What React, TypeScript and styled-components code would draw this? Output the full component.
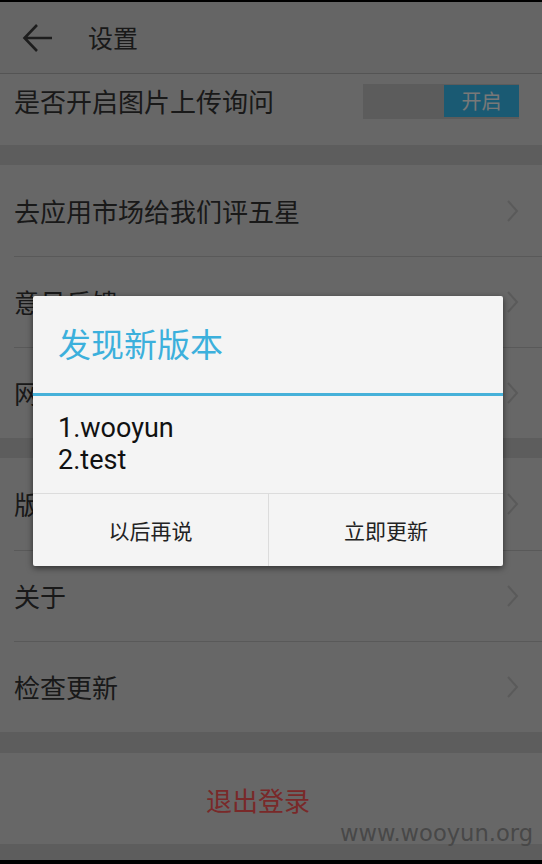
import React from "react";
import styled, { createGlobalStyle } from "styled-components";

const Global = createGlobalStyle`
  html, body { margin: 0; padding: 0; background: #000; }
  body { font-family: "Noto Sans CJK SC", "Noto Sans", sans-serif; }
  * { box-sizing: border-box; }
`;

const Screen = styled.div`
  position: relative;
  width: 542px;
  height: 864px;
  overflow: hidden;
  background: #000;
  display: flex;
  flex-direction: column;
`;

const StatusEdge = styled.div`
  height: 2px;
  background: #000;
  flex: none;
`;

const Page = styled.div`
  flex: none;
  height: 858px;
  background: #bababa;
  display: flex;
  flex-direction: column;
`;

const BottomEdge = styled.div`
  flex: 1;
  background: #000;
`;

const Header = styled.header`
  height: 72px;
  flex: none;
  background: #cbcbcb;
  border-bottom: 1px solid #a8a8a8;
  display: flex;
  align-items: center;
  padding-left: 22px;
`;

const BackButton = styled.div`
  width: 32px;
  height: 30px;
  display: flex;
  align-items: center;
  margin-right: 34px;
`;

const HeaderTitle = styled.h1`
  margin: 0;
  font-size: 25px;
  font-weight: 400;
  color: #333;
  line-height: 1;
`;

const Group = styled.section<{ $gapAfter?: number }>`
  flex: none;
  background: #cecece;
  margin-bottom: ${(p) => p.$gapAfter ?? 20}px;
`;

const Row = styled.div<{ $h?: number; $divider?: boolean; $padBottom?: number }>`
  height: ${(p) => p.$h ?? 91}px;
  display: flex;
  align-items: center;
  padding: 0 22px ${(p) => p.$padBottom ?? 0}px 14px;
  position: relative;
  ${(p) =>
    p.$divider
      ? `&::before { content: ""; position: absolute; left: 14px; right: 0; top: 0; height: 1px; background: #b2b2b2; }`
      : ""}
`;

const RowLabel = styled.span`
  flex: 1;
  font-size: 26px;
  color: #333;
  line-height: 1;
`;

const Switch = styled.div`
  display: flex;
  align-items: center;
  width: 156px;
  height: 35px;
  background: #b8b8b8;
  margin-right: 1px;
`;

const SwitchOn = styled.div`
  margin-left: auto;
  width: 75px;
  height: 32px;
  background: #35b4e6;
  color: #f0f0f0;
  font-size: 20px;
  display: flex;
  align-items: center;
  justify-content: center;
  line-height: 1;
`;

const LogoutRow = styled.div`
  height: 91px;
  display: flex;
  align-items: center;
  justify-content: center;
  font-size: 26px;
  color: #f25252;
  padding: 2px 26px 0 0;
`;

const Dim = styled.div`
  position: absolute;
  inset: 0;
  background: rgba(0, 0, 0, 0.5);
`;

const Dialog = styled.div`
  position: absolute;
  left: 33px;
  top: 296px;
  width: 470px;
  background: #f4f4f4;
  border-radius: 2px;
  box-shadow: 0 2px 6px rgba(0, 0, 0, 0.55);
  display: flex;
  flex-direction: column;
`;

const DialogTitle = styled.div`
  height: 100px;
  display: flex;
  align-items: center;
  padding: 0 0 3px 25px;
  font-size: 33px;
  color: #3cb0dc;
  border-bottom: 3px solid #46b1d9;
  line-height: 1;
`;

const DialogBody = styled.div`
  padding: 16px 25px 0 25px;
  font-family: Roboto, "Noto Sans", sans-serif;
  font-size: 27px;
  line-height: 32px;
  color: #111;
  height: 97px;
`;

const DialogButtons = styled.div`
  display: grid;
  grid-template-columns: 1fr 1fr;
  height: 73px;
  border-top: 1px solid #dcdcdc;
`;

const DialogButton = styled.div<{ $divider?: boolean }>`
  display: flex;
  align-items: center;
  justify-content: center;
  font-size: 21px;
  color: #222;
  ${(p) => (p.$divider ? "border-left: 1px solid #dcdcdc;" : "")}
`;

const Watermark = styled.div`
  position: absolute;
  right: 9px;
  top: 822px;
  font-family: "DejaVu Sans", "Liberation Sans", sans-serif;
  font-size: 22.6px;
  color: #484848;
  line-height: 1;
`;

const Chevron = () => (
  <svg width="14" height="24" viewBox="0 0 14 24" style={{ flex: "none" }}>
    <path d="M2 2 L11 12 L2 22" fill="none" stroke="#b4b4b4" strokeWidth="2" />
  </svg>
);

const BackArrow = () => (
  <svg width="32" height="30" viewBox="0 0 32 30">
    <path d="M30 15 H3 M15 2 L2.5 15 L15 28" fill="none" stroke="#3a3a3a" strokeWidth="2.6" />
  </svg>
);

export default function App() {
  return (
    <>
      <Global />
      <Screen>
        <StatusEdge />
        <Page>
          <Header>
            <BackButton>
              <BackArrow />
            </BackButton>
            <HeaderTitle>设置</HeaderTitle>
          </Header>
          <Group>
            <Row $h={71} $padBottom={17}>
              <RowLabel>是否开启图片上传询问</RowLabel>
              <Switch>
                <SwitchOn>开启</SwitchOn>
              </Switch>
            </Row>
          </Group>
          <Group>
            <Row>
              <RowLabel>去应用市场给我们评五星</RowLabel>
              <Chevron />
            </Row>
            <Row $divider>
              <RowLabel>意见反馈</RowLabel>
              <Chevron />
            </Row>
            <Row $divider>
              <RowLabel>网络设置</RowLabel>
              <Chevron />
            </Row>
          </Group>
          <Group $gapAfter={21}>
            <Row $h={92}>
              <RowLabel>版本信息</RowLabel>
              <Chevron />
            </Row>
            <Row $divider $h={91}>
              <RowLabel>关于</RowLabel>
              <Chevron />
            </Row>
            <Row $divider $h={91}>
              <RowLabel>检查更新</RowLabel>
              <Chevron />
            </Row>
          </Group>
          <Group $gapAfter={0}>
            <LogoutRow>退出登录</LogoutRow>
          </Group>
        </Page>
        <BottomEdge />
        <Dim />
        <Dialog>
          <DialogTitle>发现新版本</DialogTitle>
          <DialogBody>
            1.wooyun
            <br />
            2.test
          </DialogBody>
          <DialogButtons>
            <DialogButton>以后再说</DialogButton>
            <DialogButton $divider>立即更新</DialogButton>
          </DialogButtons>
        </Dialog>
        <Watermark>www.wooyun.org</Watermark>
      </Screen>
    </>
  );
}
